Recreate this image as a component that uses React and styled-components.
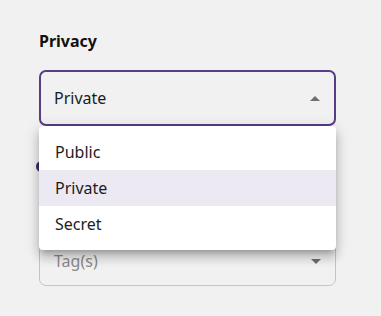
import React from 'react';
import styled, { createGlobalStyle } from 'styled-components';

const Global = createGlobalStyle`
  body {
    margin: 0;
    background: #f1f1f1;
    font-family: 'Noto Sans', 'Lato', sans-serif;
  }
`;

const Page = styled.div`
  position: relative;
  padding: 30px 0 0 39px;
  width: 297px;
  height: 286px;
`;

const Label = styled.div`
  font-size: 16px;
  font-weight: 700;
  color: #111;
  line-height: 22px;
  margin-bottom: 18px;
`;

const Select = styled.div`
  position: relative;
  box-sizing: border-box;
  display: flex;
  align-items: center;
  justify-content: space-between;
  height: 56px;
  padding: ${(p) => (p.muted ? '6px' : '0')} 14px 0 ${(p) => (p.active ? 13 : 14)}px;
  border: ${(p) => (p.active ? '2px solid #573c86' : '1px solid #c4c4c4')};
  border-radius: 7px;
  font-size: 16px;
  color: ${(p) => (p.muted ? '#8a8a8a' : '#1c1c1c')};
`;

const Caret = styled.span`
  width: 0;
  height: 0;
  border-left: 5px solid transparent;
  border-right: 5px solid transparent;
  ${(p) => (p.up ? 'border-bottom: 5px solid #6e6e6e;' : 'border-top: 5px solid #6e6e6e;')}
`;

const Second = styled.div`
  position: relative;
  margin-top: 35px;
`;

const Dot = styled.span`
  display: block;
  width: 11px;
  height: 11px;
  margin-left: -3px;
  border-radius: 50%;
  background: #3d2c63;
  margin-bottom: 58px;
`;

const Menu = styled.ul`
  position: absolute;
  top: 126px;
  left: 39px;
  width: 297px;
  margin: 0;
  padding: 8px 0;
  list-style: none;
  background: #fff;
  border-radius: 4px;
  box-shadow: 0 5px 5px -3px rgba(0, 0, 0, 0.2), 0 8px 10px 1px rgba(0, 0, 0, 0.14),
    0 3px 14px 2px rgba(0, 0, 0, 0.12);
  z-index: 2;
`;

const Item = styled.li`
  height: 36px;
  display: flex;
  align-items: center;
  padding-left: 16px;
  font-size: 16px;
  color: #1c1c1c;
  background: ${(p) => (p.selected ? '#ede9f3' : 'transparent')};
`;

export default function App() {
  return (
    <Page>
      <Global />
      <Label>Privacy</Label>
      <Select active>
        Private
        <Caret up />
      </Select>
      <Second>
        <Dot />
        <Select muted>
          Tag(s)
          <Caret />
        </Select>
      </Second>
      <Menu>
        <Item>Public</Item>
        <Item selected>Private</Item>
        <Item>Secret</Item>
      </Menu>
    </Page>
  );
}
